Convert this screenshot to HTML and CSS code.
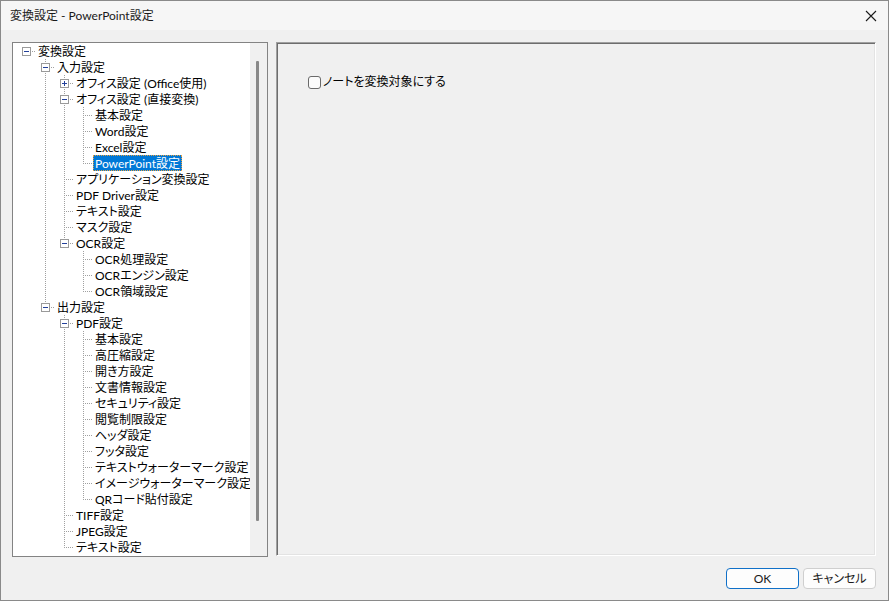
FILE: index.html
```html
<!DOCTYPE html>
<html lang="ja">
<head>
<meta charset="utf-8">
<title>変換設定 - PowerPoint設定</title>
<link rel="stylesheet" href="styles.css">
</head>
<body>
<div class="window">
  <div class="titlebar">
    <span class="title">変換設定 - PowerPoint設定</span>
    <svg class="close" width="12" height="12" viewBox="0 0 12 12"><path d="M1 1L11 11M11 1L1 11" stroke="#1a1a1a" stroke-width="1.1" fill="none"/></svg>
  </div>
  <div class="content">
    <div class="main">
      <div class="tree">
        <div class="list">
          <div class="row"><i class="c root"><b class="box"></b></i><span class="t">変換設定</span></div>
          <div class="row"><i class="g"></i><i class="c mid"><b class="box"></b></i><span class="t">入力設定</span></div>
          <div class="row"><i class="g"></i><i class="g v"></i><i class="c mid"><b class="box plus"></b></i><span class="t">オフィス設定 (Office使用)</span></div>
          <div class="row"><i class="g"></i><i class="g v"></i><i class="c mid"><b class="box"></b></i><span class="t">オフィス設定 (直接変換)</span></div>
          <div class="row"><i class="g"></i><i class="g v"></i><i class="g v"></i><i class="c mid"></i><span class="t">基本設定</span></div>
          <div class="row"><i class="g"></i><i class="g v"></i><i class="g v"></i><i class="c mid"></i><span class="t">Word設定</span></div>
          <div class="row"><i class="g"></i><i class="g v"></i><i class="g v"></i><i class="c mid"></i><span class="t">Excel設定</span></div>
          <div class="row"><i class="g"></i><i class="g v"></i><i class="g v"></i><i class="c end"></i><span class="t sel">PowerPoint設定</span></div>
          <div class="row"><i class="g"></i><i class="g v"></i><i class="c mid"></i><span class="t">アプリケーション変換設定</span></div>
          <div class="row"><i class="g"></i><i class="g v"></i><i class="c mid"></i><span class="t">PDF Driver設定</span></div>
          <div class="row"><i class="g"></i><i class="g v"></i><i class="c mid"></i><span class="t">テキスト設定</span></div>
          <div class="row"><i class="g"></i><i class="g v"></i><i class="c mid"></i><span class="t">マスク設定</span></div>
          <div class="row"><i class="g"></i><i class="g v"></i><i class="c end"><b class="box"></b></i><span class="t">OCR設定</span></div>
          <div class="row"><i class="g"></i><i class="g v"></i><i class="g"></i><i class="c mid"></i><span class="t">OCR処理設定</span></div>
          <div class="row"><i class="g"></i><i class="g v"></i><i class="g"></i><i class="c mid"></i><span class="t">OCRエンジン設定</span></div>
          <div class="row"><i class="g"></i><i class="g v"></i><i class="g"></i><i class="c end"></i><span class="t">OCR領域設定</span></div>
          <div class="row"><i class="g"></i><i class="c end"><b class="box"></b></i><span class="t">出力設定</span></div>
          <div class="row"><i class="g"></i><i class="g"></i><i class="c mid"><b class="box"></b></i><span class="t">PDF設定</span></div>
          <div class="row"><i class="g"></i><i class="g"></i><i class="g v"></i><i class="c mid"></i><span class="t">基本設定</span></div>
          <div class="row"><i class="g"></i><i class="g"></i><i class="g v"></i><i class="c mid"></i><span class="t">高圧縮設定</span></div>
          <div class="row"><i class="g"></i><i class="g"></i><i class="g v"></i><i class="c mid"></i><span class="t">開き方設定</span></div>
          <div class="row"><i class="g"></i><i class="g"></i><i class="g v"></i><i class="c mid"></i><span class="t">文書情報設定</span></div>
          <div class="row"><i class="g"></i><i class="g"></i><i class="g v"></i><i class="c mid"></i><span class="t">セキュリティ設定</span></div>
          <div class="row"><i class="g"></i><i class="g"></i><i class="g v"></i><i class="c mid"></i><span class="t">閲覧制限設定</span></div>
          <div class="row"><i class="g"></i><i class="g"></i><i class="g v"></i><i class="c mid"></i><span class="t">ヘッダ設定</span></div>
          <div class="row"><i class="g"></i><i class="g"></i><i class="g v"></i><i class="c mid"></i><span class="t">フッタ設定</span></div>
          <div class="row"><i class="g"></i><i class="g"></i><i class="g v"></i><i class="c mid"></i><span class="t">テキストウォーターマーク設定</span></div>
          <div class="row"><i class="g"></i><i class="g"></i><i class="g v"></i><i class="c mid"></i><span class="t">イメージウォーターマーク設定</span></div>
          <div class="row"><i class="g"></i><i class="g"></i><i class="g v"></i><i class="c end"></i><span class="t">QRコード貼付設定</span></div>
          <div class="row"><i class="g"></i><i class="g"></i><i class="c mid"></i><span class="t">TIFF設定</span></div>
          <div class="row"><i class="g"></i><i class="g"></i><i class="c mid"></i><span class="t">JPEG設定</span></div>
          <div class="row"><i class="g"></i><i class="g"></i><i class="c end"></i><span class="t">テキスト設定</span></div>
        </div>
        <div class="scrollbar"><div class="thumb"></div></div>
      </div>
      <div class="panel">
        <label class="check"><span class="cbox"></span><span>ノートを変換対象にする</span></label>
      </div>
    </div>
    <div class="footer">
      <button class="btn primary">OK</button>
      <button class="btn">キャンセル</button>
    </div>
  </div>
</div>
</body>
</html>
```

FILE: styles.css
```css
html, body {
  margin: 0;
  padding: 0;
}
body {
  width: 889px;
  height: 601px;
  overflow: hidden;
  font-family: "Lato", "Noto Sans CJK JP", sans-serif;
  font-feature-settings: "palt";
  font-size: 12px;
  color: #000;
}
.window {
  box-sizing: border-box;
  width: 889px;
  height: 601px;
  border: 1px solid #8a8a8a;
  background: #f0f0f0;
  display: flex;
  flex-direction: column;
}
.titlebar {
  height: 29px;
  flex: none;
  background: #f6f6f6;
  display: flex;
  align-items: center;
  justify-content: space-between;
  padding: 0 10px 0 9px;
}
.title {
  font-size: 12px;
  line-height: 16px;
  color: #1a1a1a;
}
.close {
  display: block;
  margin-right: 1px;
}
.content {
  flex: 1;
  display: flex;
  flex-direction: column;
}
.main {
  display: flex;
  gap: 8px;
  padding: 12px 0 0 11px;
}
.tree {
  box-sizing: border-box;
  width: 256px;
  height: 515px;
  flex: none;
  border: 1px solid #838383;
  background: #fff;
  display: flex;
  overflow: hidden;
}
.list {
  flex: 1;
  min-width: 0;
  overflow: hidden;
  padding-left: 4px;
}
.row {
  display: flex;
  height: 16px;
  align-items: flex-start;
}
.g, .c {
  display: block;
  flex: none;
  width: 19px;
  height: 16px;
  position: relative;
}
.g.v::before, .c::before {
  content: "";
  position: absolute;
  left: 9px;
  top: 0;
  width: 1px;
  height: 16px;
  background: repeating-linear-gradient(to bottom, #a0a0a0 0 1px, transparent 1px 2px);
}
.c.end::before {
  height: 9px;
}
.c.root::before {
  display: none;
}
.c::after {
  content: "";
  position: absolute;
  left: 10px;
  top: 8px;
  width: 9px;
  height: 1px;
  background: repeating-linear-gradient(to right, transparent 0 1px, #a0a0a0 1px 2px);
}
.box {
  position: absolute;
  z-index: 1;
  left: 5px;
  top: 4px;
  width: 9px;
  height: 9px;
  box-sizing: border-box;
  border: 1px solid #9a9a9a;
  background: #fff;
}
.box::before {
  content: "";
  position: absolute;
  left: 1px;
  top: 3px;
  width: 5px;
  height: 1px;
  background: #23409a;
}
.box.plus::after {
  content: "";
  position: absolute;
  left: 3px;
  top: 1px;
  width: 1px;
  height: 5px;
  background: #23409a;
}
.t {
  display: block;
  flex: none;
  box-sizing: border-box;
  padding: 1px 2px 0;
  line-height: 16px;
  height: 16px;
  white-space: nowrap;
}
.t.sel {
  background: #0078d7;
  color: #fff;
  outline: 1px dotted #e8a040;
  outline-offset: -1px;
}
.scrollbar {
  width: 17px;
  flex: none;
  background: #f0f0f0;
  padding: 18px 0 0 6px;
  box-sizing: border-box;
}
.thumb {
  width: 3px;
  height: 460px;
  background: #898989;
  border-radius: 1px;
}
.panel {
  box-sizing: border-box;
  width: 600px;
  height: 514px;
  flex: none;
  border: 1px solid;
  border-color: #a0a0a0 #ffffff #ffffff #a0a0a0;
  box-shadow: inset 1px 1px 0 #6d6d6d, inset -1px -1px 0 #e3e3e3;
  background: #f0f0f0;
  padding: 31px 0 0 31px;
}
.check {
  display: flex;
  align-items: center;
  gap: 2px;
  line-height: 16px;
}
.cbox {
  display: block;
  box-sizing: border-box;
  width: 13px;
  height: 13px;
  border: 1px solid #6a6a6a;
  border-radius: 3px;
  background: #fbfbfb;
}
.footer {
  display: flex;
  justify-content: flex-end;
  gap: 4px;
  padding: 11px 12px 0 0;
}
.btn {
  box-sizing: border-box;
  width: 73px;
  height: 21px;
  padding: 0;
  font-family: "Lato", "Noto Sans CJK JP", sans-serif;
  font-feature-settings: "palt";
  font-size: 12px;
  line-height: 16px;
  color: #1a1a1a;
  background: #fdfdfd;
  border: 1px solid #cfcfcf;
  border-radius: 4px;
}
.btn.primary {
  border: 1.5px solid #1070c8;
}
```
